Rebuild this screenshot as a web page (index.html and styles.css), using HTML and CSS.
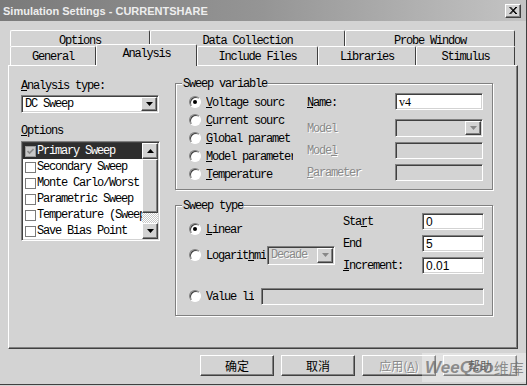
FILE: index.html
```html
<!DOCTYPE html>
<html lang="en">
<head>
    <meta charset="UTF-8">
    <meta name="viewport" content="width=device-width, initial-scale=1.0">
    <title>Simulation Settings - CURRENTSHARE</title>
    <link rel="stylesheet" href="styles.css">
</head>
<body>
    <div class="window">
        <div class="titlebar">
            <span class="title">Simulation Settings - CURRENTSHARE</span>
            <span class="close-btn">
                <svg width="8" height="7" viewBox="0 0 8 7"><path d="M0.5 0L7 7M1.5 0L8 7M7 0L0.5 7M8 0L1.5 7" stroke="#000" stroke-width="1"/></svg>
            </span>
        </div>

        <div class="tabs">
            <div class="tab-row back-row">
                <div class="tab tab-options">Options</div>
                <div class="tab tab-data">Data Collection</div>
                <div class="tab tab-probe">Probe Window</div>
            </div>
            <div class="tab-row front-row">
                <div class="tab tab-general">General</div>
                <div class="tab tab-analysis active">Analysis</div>
                <div class="tab tab-include">Include Files</div>
                <div class="tab tab-libraries">Libraries</div>
                <div class="tab tab-stimulus">Stimulus</div>
            </div>
        </div>

        <div class="panel">
            <div class="left-col">
                <div class="lbl"><u>A</u>nalysis type:</div>
                <div class="combo analysis-combo">
                    <span class="combo-text">DC Sweep</span>
                    <span class="drop"><svg width="7" height="4" viewBox="0 0 7 4"><path d="M0 0H7L3.5 4Z" fill="#000"/></svg></span>
                </div>
                <div class="lbl options-lbl"><u>O</u>ptions</div>
                <div class="listbox">
                    <div class="list-items">
                        <div class="item selected"><span class="check checked"><svg width="7" height="7" viewBox="0 0 7 7"><path d="M0.5 3L2.5 5L6.5 1" stroke="#8a8a8a" stroke-width="1.6" fill="none"/></svg></span>Primary Sweep</div>
                        <div class="item"><span class="check"></span>Secondary Sweep</div>
                        <div class="item"><span class="check"></span>Monte Carlo/Worst Case</div>
                        <div class="item"><span class="check"></span>Parametric Sweep</div>
                        <div class="item"><span class="check"></span>Temperature (Sweep)</div>
                        <div class="item"><span class="check"></span>Save Bias Point</div>
                    </div>
                    <div class="scrollbar">
                        <div class="sb-btn"><svg width="7" height="4" viewBox="0 0 7 4"><path d="M0 4H7L3.5 0Z" fill="#000"/></svg></div>
                        <div class="sb-thumb"></div>
                        <div class="sb-track"></div>
                        <div class="sb-btn"><svg width="7" height="4" viewBox="0 0 7 4"><path d="M0 0H7L3.5 4Z" fill="#000"/></svg></div>
                    </div>
                </div>
            </div>

            <div class="right-col">
                <div class="group var-group">
                    <span class="group-title">Sweep variable</span>
                    <div class="var-body">
                        <div class="radios">
                            <div class="radio-row"><span class="radio on"></span><span class="radio-lbl"><u>V</u>oltage sourc</span></div>
                            <div class="radio-row"><span class="radio"></span><span class="radio-lbl"><u>C</u>urrent sourc</span></div>
                            <div class="radio-row"><span class="radio"></span><span class="radio-lbl"><u>G</u>lobal paramet</span></div>
                            <div class="radio-row"><span class="radio"></span><span class="radio-lbl"><u>M</u>odel parameter</span></div>
                            <div class="radio-row"><span class="radio"></span><span class="radio-lbl"><u>T</u>emperature</span></div>
                        </div>
                        <div class="fields">
                            <div class="f-lbl name-row"><u>N</u>ame:</div>
                            <div class="field-cell name-row"><div class="field v4">v4</div></div>
                            <div class="f-lbl off">Model</div>
                            <div class="field-cell">
                                <div class="combo model-combo off">
                                    <span class="combo-text"></span>
                                    <span class="drop"><svg width="7" height="4" viewBox="0 0 7 4"><path d="M0 0H7L3.5 4Z" fill="#888"/></svg></span>
                                </div>
                            </div>
                            <div class="f-lbl off">Mode<u>l</u></div>
                            <div class="field-cell"><div class="field off"></div></div>
                            <div class="f-lbl off"><u>P</u>arameter</div>
                            <div class="field-cell"><div class="field off"></div></div>
                        </div>
                    </div>
                </div>

                <div class="group type-group">
                    <span class="group-title">Sweep type</span>
                    <div class="type-top">
                        <div class="type-left">
                            <div class="radio-row"><span class="radio on"></span><span class="radio-lbl"><u>L</u>inear</span></div>
                            <div class="radio-row log-row">
                                <span class="radio"></span><span class="radio-lbl log-lbl">Logarit<u>h</u>mic</span>
                                <div class="combo decade-combo off">
                                    <span class="combo-text">Decade</span>
                                    <span class="drop"><svg width="7" height="4" viewBox="0 0 7 4"><path d="M0 0H7L3.5 4Z" fill="#888"/></svg></span>
                                </div>
                            </div>
                        </div>
                        <div class="range-grid">
                            <div class="f-lbl">Sta<u>r</u>t</div>
                            <div class="field">0</div>
                            <div class="f-lbl">End</div>
                            <div class="field">5</div>
                            <div class="f-lbl"><u>I</u>ncrement:</div>
                            <div class="field">0.01</div>
                        </div>
                    </div>
                    <div class="radio-row value-row">
                        <span class="radio"></span><span class="radio-lbl value-lbl">Value list</span>
                        <div class="field value-field off"></div>
                    </div>
                </div>
            </div>
        </div>

        <div class="buttons">
            <div class="btn">确定</div>
            <div class="btn">取消</div>
            <div class="btn disabled">应用(<u>A</u>)</div>
            <div class="btn">帮助</div>
        </div>

        <div class="watermark"><span class="wm-latin">WeeQoo</span><span class="wm-cjk">维库</span></div>
    </div>
</body>
</html>
```

FILE: styles.css
```css
body {
    margin: 0;
    background-color: #d3d3d3;
}
.window {
    position: relative;
    width: 527px;
    height: 385px;
    box-sizing: border-box;
    background-color: #d3d3d3;
    border-right: 1px solid #404040;
    border-bottom: 1px solid #404040;
    font-family: 'Liberation Mono', 'DejaVu Sans Mono', monospace;
    font-size: 12px;
    letter-spacing: -1.2px;
    color: #000;
    overflow: hidden;
}
u {
    text-underline-offset: 1px;
}

/* title bar */
.titlebar {
    height: 21px;
    display: flex;
    align-items: center;
    justify-content: space-between;
    padding: 0 5px 0 3px;
    background: linear-gradient(to right, #7a7a7a, #959595 50%, #c4c4c4);
}
.title {
    font-family: 'Liberation Sans', Arial, sans-serif;
    font-weight: bold;
    font-size: 11px;
    letter-spacing: 0;
    color: #eeeeee;
}
.close-btn {
    width: 16px;
    height: 14px;
    box-sizing: border-box;
    display: flex;
    align-items: center;
    justify-content: center;
    background-color: #d3d3d3;
    border: 1px solid;
    border-color: #fff #404040 #404040 #fff;
    box-shadow: inset -1px -1px 0 #808080;
}

/* tabs */
.tabs {
    margin-top: 9px;
    padding-left: 10px;
}
.tab-row {
    display: flex;
}
.tab {
    box-sizing: border-box;
    text-align: center;
    line-height: 13px;
    padding-top: 4px;
    background-color: #d3d3d3;
    border-top: 1px solid #fff;
    border-left: 1px solid #fff;
    border-right: 1px solid #404040;
    border-radius: 2px 2px 0 0;
}
.back-row .tab {
    height: 16px;
}
.front-row .tab {
    height: 19px;
}
.front-row .tab.active {
    position: relative;
    z-index: 1;
    height: 22px;
    margin-top: -2px;
    margin-bottom: -1px;
    padding-top: 3px;
}
.tab-options { width: 140px; }
.tab-data { width: 195px; }
.tab-probe { width: 170px; }
.tab-general { width: 86px; }
.tab-analysis { width: 101px; }
.tab-include { width: 121px; }
.tab-libraries { width: 98px; }
.tab-stimulus { width: 99px; }

/* panel */
.panel {
    margin-left: 8px;
    width: 510px;
    height: 284px;
    box-sizing: border-box;
    border-top: 1px solid #fff;
    border-left: 1px solid #fff;
    border-right: 1px solid #404040;
    border-bottom: 1px solid #404040;
    box-shadow: inset -1px -1px 0 #808080;
    padding: 12px 0 0 12px;
    display: flex;
}
.left-col {
    width: 138px;
}
.right-col {
    margin-left: 16px;
    width: 318px;
}
.lbl {
    line-height: 13px;
    padding-top: 2px;
}
.options-lbl {
    margin-top: 10px;
}

/* sunken boxes */
.combo, .field, .listbox {
    box-sizing: border-box;
    background-color: #fff;
    border: 1px solid;
    border-color: #808080 #fff #fff #808080;
    box-shadow: inset 1px 1px 0 #404040, inset -1px -1px 0 #d3d3d3;
}
.combo {
    display: flex;
    align-items: center;
    justify-content: space-between;
    padding: 1px 1px 1px 3px;
}
.combo.off, .field.off {
    background-color: #d3d3d3;
}
.combo-text {
    line-height: 13px;
    padding-top: 1px;
}
.combo.off .combo-text {
    color: #8a8a8a;
    text-shadow: 1px 1px 0 #fff;
}
.drop {
    width: 16px;
    height: 100%;
    box-sizing: border-box;
    display: flex;
    align-items: center;
    justify-content: center;
    background-color: #d3d3d3;
    border: 1px solid;
    border-color: #fff #404040 #404040 #fff;
    box-shadow: inset -1px -1px 0 #808080;
}
.analysis-combo {
    margin-top: 2px;
    width: 138px;
    height: 18px;
}
.model-combo {
    width: 100%;
    height: 18px;
}
.decade-combo {
    margin-left: 1px;
    width: 68px;
    height: 19px;
}
.field {
    height: 17px;
    padding: 1px 3px;
    font-family: 'Liberation Sans', Arial, sans-serif;
    font-size: 12px;
    letter-spacing: 0;
    line-height: 14px;
}
.field.v4 {
    font-family: 'Liberation Serif', 'Times New Roman', serif;
}

/* listbox */
.listbox {
    margin-top: 3px;
    width: 139px;
    height: 100px;
    padding: 1px;
    display: flex;
}
.list-items {
    flex: 1;
    overflow: hidden;
}
.item {
    height: 16px;
    display: flex;
    align-items: center;
    padding-left: 2px;
    white-space: nowrap;
}
.item.selected {
    background-color: #2e2e2e;
    color: #fff;
}
.check {
    flex: none;
    width: 11px;
    height: 11px;
    box-sizing: border-box;
    margin-right: 1px;
    background-color: #fff;
    border: 1px solid #7a7a7a;
    display: flex;
    align-items: center;
    justify-content: center;
}
.check.checked {
    background-color: #c8c8c8;
    border-color: #9a9a9a;
}
.scrollbar {
    width: 16px;
    display: flex;
    flex-direction: column;
}
.sb-btn, .sb-thumb {
    box-sizing: border-box;
    background-color: #d3d3d3;
    border: 1px solid;
    border-color: #fff #404040 #404040 #fff;
    box-shadow: inset -1px -1px 0 #808080;
}
.sb-btn {
    height: 16px;
    display: flex;
    align-items: center;
    justify-content: center;
}
.sb-thumb {
    height: 54px;
}
.sb-track {
    flex: 1;
    background: repeating-conic-gradient(#fff 0 25%, #c8c8c8 0 50%) 0 0 / 2px 2px;
}

/* group boxes */
.group {
    position: relative;
    box-sizing: border-box;
    border: 1px solid #808080;
    box-shadow: inset 1px 1px 0 #fff, 1px 1px 0 #fff;
}
.group-title {
    position: absolute;
    top: -6px;
    left: 6px;
    padding: 0 1px;
    line-height: 13px;
    background-color: #d3d3d3;
}
.var-group {
    margin-top: 5px;
    height: 107px;
}
.type-group {
    margin-top: 15px;
    height: 111px;
}
.var-body {
    display: flex;
    padding: 9px 0 0 13px;
}
.radios {
    width: 118px;
}
.radio-row {
    height: 18px;
    display: flex;
    align-items: center;
}
.radio {
    flex: none;
    position: relative;
    width: 12px;
    height: 12px;
    box-sizing: border-box;
    border-radius: 50%;
    background-color: #fff;
    border: 1px solid;
    border-color: #808080 #fff #fff #808080;
    box-shadow: inset 1px 1px 0 #404040;
}
.radio.on::after {
    content: '';
    position: absolute;
    left: 3px;
    top: 3px;
    width: 4px;
    height: 4px;
    border-radius: 50%;
    background-color: #000;
}
.radio-lbl {
    margin-left: 5px;
    width: 87px;
    white-space: nowrap;
    overflow: hidden;
    line-height: 14px;
    padding-top: 2px;
}
.fields {
    display: grid;
    grid-template-columns: 88px 88px;
    grid-template-rows: 22px 18px 18px 18px;
    row-gap: 4px;
    align-items: center;
}
.fields .name-row {
    align-self: start;
}
.fields .f-lbl.name-row {
    margin-top: 2px;
}
.f-lbl {
    line-height: 13px;
    padding-top: 2px;
    white-space: nowrap;
}
.f-lbl.off {
    color: #8a8a8a;
    text-shadow: 1px 1px 0 #fff;
}

/* sweep type */
.type-top {
    display: flex;
    padding: 7px 0 0 13px;
}
.type-left {
    width: 154px;
    padding-top: 7px;
}
.log-row {
    margin-top: 8px;
}
.log-lbl {
    width: 60px;
}
.range-grid {
    display: grid;
    grid-template-columns: 79px 62px;
    grid-template-rows: 17px 17px 17px;
    row-gap: 5px;
    align-items: center;
}
.value-row {
    margin: 13px 0 0 13px;
}
.value-lbl {
    width: 48px;
}
.value-field {
    margin-left: 7px;
    width: 223px;
}

/* buttons */
.buttons {
    display: flex;
    justify-content: flex-end;
    gap: 7px;
    margin-top: 6px;
    padding-right: 9px;
}
.btn {
    width: 74px;
    height: 21px;
    box-sizing: border-box;
    display: flex;
    align-items: center;
    justify-content: center;
    font-family: 'Noto Sans CJK SC', sans-serif;
    font-size: 12px;
    letter-spacing: 0;
    background-color: #d3d3d3;
    border: 1px solid;
    border-color: #fff #404040 #404040 #fff;
    box-shadow: inset -1px -1px 0 #808080;
}
.btn.disabled {
    color: #8a8a8a;
    text-shadow: 1px 1px 0 #fff;
}

/* watermark overlay */
.watermark {
    position: absolute;
    right: 0;
    bottom: 2px;
    width: 104px;
    height: 29px;
    display: flex;
    align-items: center;
    padding-left: 3px;
    box-sizing: border-box;
    background-color: rgba(255, 255, 255, 0.35);
    color: rgba(110, 110, 110, 0.75);
    letter-spacing: 0;
}
.wm-latin {
    font-family: 'Liberation Sans', Arial, sans-serif;
    font-style: italic;
    font-weight: bold;
    font-size: 17px;
}
.wm-cjk {
    font-family: 'Noto Sans CJK SC', sans-serif;
    font-size: 15px;
}
```
